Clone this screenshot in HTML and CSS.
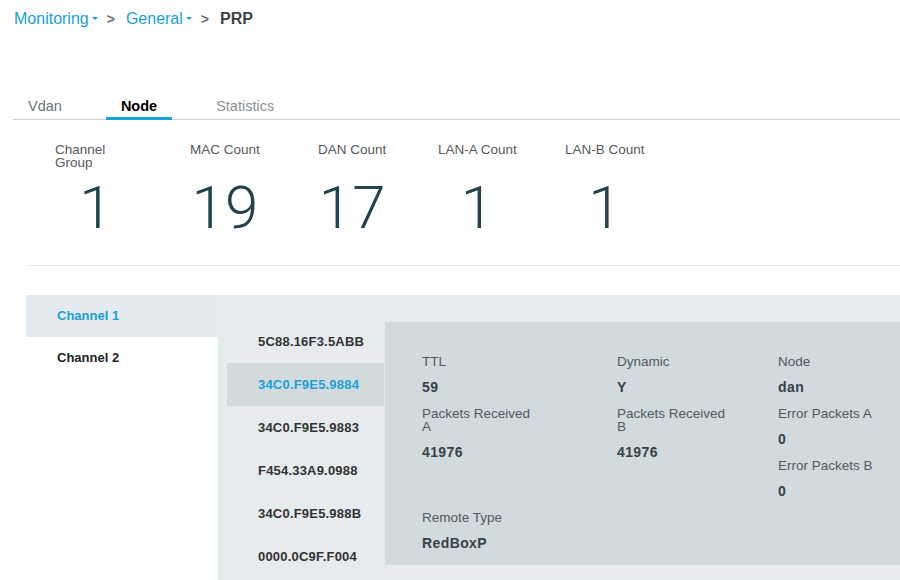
FILE: index.html
```html
<!DOCTYPE html>
<html>
<head>
<meta charset="utf-8">
<link rel="stylesheet" href="styles.css">
</head>
<body>
<div class="crumbs">
  <span class="crumb-link">Monitoring</span><span class="caret"></span>
  <span class="sep">&gt;</span>
  <span class="crumb-link">General</span><span class="caret"></span>
  <span class="sep">&gt;</span>
  <span class="crumb-current">PRP</span>
</div>

<div class="tabs">
  <div class="tab">Vdan</div>
  <div class="tab active">Node</div>
  <div class="tab muted">Statistics</div>
</div>

<div class="stats">
  <div class="stat-cell"><div class="stat narrow"><div class="stat-label">Channel Group</div><div class="stat-num">1</div></div></div>
  <div class="stat-cell"><div class="stat"><div class="stat-label">MAC Count</div><div class="stat-num">19</div></div></div>
  <div class="stat-cell"><div class="stat"><div class="stat-label">DAN Count</div><div class="stat-num">17</div></div></div>
  <div class="stat-cell"><div class="stat"><div class="stat-label">LAN-A Count</div><div class="stat-num">1</div></div></div>
  <div class="stat-cell"><div class="stat"><div class="stat-label">LAN-B Count</div><div class="stat-num">1</div></div></div>
</div>

<div class="divider"></div>

<div class="panel">
  <div class="channels">
    <div class="channel selected">Channel 1</div>
    <div class="channel">Channel 2</div>
  </div>
  <div class="main">
    <div class="macs">
      <div class="mac">5C88.16F3.5ABB</div>
      <div class="mac selected">34C0.F9E5.9884</div>
      <div class="mac">34C0.F9E5.9883</div>
      <div class="mac">F454.33A9.0988</div>
      <div class="mac">34C0.F9E5.988B</div>
      <div class="mac">0000.0C9F.F004</div>
    </div>
    <div class="detail">
      <div class="field"><div class="label">TTL</div><div class="value">59</div></div>
      <div class="field"><div class="label">Dynamic</div><div class="value">Y</div></div>
      <div class="field"><div class="label">Node</div><div class="value">dan</div></div>
      <div class="field"><div class="label">Packets Received A</div><div class="value">41976</div></div>
      <div class="field"><div class="label">Packets Received B</div><div class="value">41976</div></div>
      <div class="stack">
        <div class="field"><div class="label">Error Packets A</div><div class="value">0</div></div>
        <div class="field"><div class="label">Error Packets B</div><div class="value">0</div></div>
      </div>
      <div class="field"><div class="label">Remote Type</div><div class="value">RedBoxP</div></div>
    </div>
  </div>
</div>
</body>
</html>
```

FILE: styles.css
```css
html, body {
  margin: 0;
  padding: 0;
  background: #ffffff;
  font-family: "Liberation Sans", Arial, sans-serif;
  overflow: hidden;
}

.crumbs {
  display: flex;
  align-items: center;
  height: 18px;
  padding: 10px 0 0 14px;
  font-size: 16px;
  line-height: 18px;
}
.crumb-link { color: #1ba0d7; }
.caret {
  width: 0;
  height: 0;
  border-left: 3px solid transparent;
  border-right: 3px solid transparent;
  border-top: 3px solid #1ba0d7;
  margin: 0 0 2px 3px;
}
.sep {
  color: #6b7479;
  font-weight: bold;
  font-size: 14px;
  margin: 0 11px 0 9px;
}
.crumb-current {
  color: #3a4347;
  font-weight: bold;
}

.tabs {
  display: flex;
  gap: 29px;
  margin: 68px 0 0 13px;
  border-bottom: 1px solid #cfd4d7;
}
.tab {
  padding: 0 15px;
  font-size: 14.5px;
  line-height: 20px;
  height: 21px;
  color: #6b7479;
  border-bottom: 3px solid transparent;
  margin-bottom: -1px;
}
.tab.active {
  color: #000000;
  font-weight: bold;
  border-bottom-color: #1ba0d7;
}
.tab.muted { color: #8a9195; }

.stats {
  display: grid;
  grid-template-columns: 135px 128px 120px 127px auto;
  padding: 23px 0 0 55px;
}
.stat-cell { display: flex; }
.stat {
  display: flex;
  flex-direction: column;
}
.stat.narrow { width: 82px; }
.stat-label {
  font-size: 13.5px;
  line-height: 13px;
  height: 26px;
  color: #58595b;
}
.stat-num {
  text-align: center;
  font-family: Roboto, "Liberation Sans", sans-serif;
  font-weight: 300;
  font-size: 60px;
  line-height: 64px;
  color: #24424c;
  margin-top: 7px;
}

.divider {
  margin: 25px 0 0 28px;
  height: 1px;
  background: #e3e7e9;
}

.panel {
  display: flex;
  margin: 29px 0 0 26px;
  height: 300px;
}
.channels {
  width: 192px;
  flex: none;
}
.channel {
  height: 42px;
  line-height: 42px;
  padding-left: 31px;
  font-size: 13px;
  font-weight: bold;
  color: #222222;
}
.channel.selected {
  background: #e5eaee;
  color: #1ba0d7;
}
.main {
  flex: 1;
  display: flex;
  align-items: flex-start;
  background: #e6ebee;
  padding: 25px 0 0 9px;
}
.macs {
  width: 157px;
  flex: none;
}
.mac {
  height: 43px;
  line-height: 43px;
  padding-left: 31px;
  font-size: 13px;
  font-weight: bold;
  color: #333333;
  letter-spacing: 0.2px;
}
.mac.selected {
  background: #d3dadd;
  color: #1ba0d7;
}
.detail {
  flex: 1;
  margin-top: 2px;
  margin-left: 1px;
  background: #d3dadd;
  padding: 32.5px 0 2.5px 37px;
  display: grid;
  grid-template-columns: 195px 161px auto;
  align-items: start;
}
.field { padding-bottom: 13px; }
.label {
  font-size: 13.5px;
  line-height: 13px;
  color: #4f5a60;
  max-width: 112px;
}
.stack .label { max-width: none; }
.value {
  margin-top: 13px;
  font-size: 14px;
  line-height: 13px;
  font-weight: bold;
  color: #36434a;
  letter-spacing: 0.4px;
}
```
